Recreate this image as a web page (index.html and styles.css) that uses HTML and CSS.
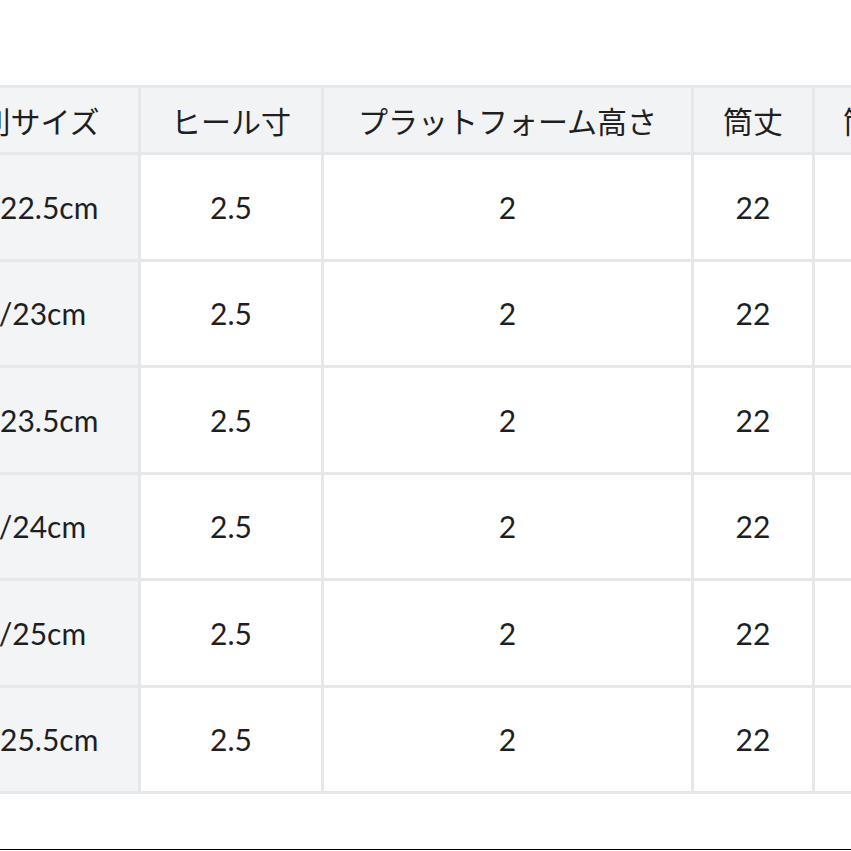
FILE: index.html
```html
<!DOCTYPE html>
<html lang="ja">
<head>
<meta charset="utf-8">
<title>サイズ表</title>
<link rel="stylesheet" href="styles.css">
</head>
<body>
<div class="page">
  <div class="size-table">
    <div class="cell head first">国別サイズ</div>
    <div class="cell head">ヒール寸</div>
    <div class="cell head">プラットフォーム高さ</div>
    <div class="cell head">筒丈</div>
    <div class="cell head">筒周り</div>

    <div class="cell first">35/22.5cm</div>
    <div class="cell">2.5</div>
    <div class="cell">2</div>
    <div class="cell">22</div>
    <div class="cell">33</div>

    <div class="cell first">36/23cm</div>
    <div class="cell">2.5</div>
    <div class="cell">2</div>
    <div class="cell">22</div>
    <div class="cell">33</div>

    <div class="cell first">37/23.5cm</div>
    <div class="cell">2.5</div>
    <div class="cell">2</div>
    <div class="cell">22</div>
    <div class="cell">34</div>

    <div class="cell first">38/24cm</div>
    <div class="cell">2.5</div>
    <div class="cell">2</div>
    <div class="cell">22</div>
    <div class="cell">34</div>

    <div class="cell first">39/25cm</div>
    <div class="cell">2.5</div>
    <div class="cell">2</div>
    <div class="cell">22</div>
    <div class="cell">35</div>

    <div class="cell first">40/25.5cm</div>
    <div class="cell">2.5</div>
    <div class="cell">2</div>
    <div class="cell">22</div>
    <div class="cell">35</div>
  </div>
</div>
</body>
</html>
```
FILE: styles.css
```css
html, body {
  margin: 0;
  padding: 0;
  background: #ffffff;
}

body {
  width: 851px;
  height: 851px;
  overflow: hidden;
}

.page {
  width: 851px;
  height: 850px;
  border-bottom: 1px solid #000000;
  overflow: hidden;
  padding-top: 85px;
  box-sizing: border-box;
}

.size-table {
  display: grid;
  grid-template-columns: 226px 180px 367px 118px 146px;
  grid-template-rows: 64px repeat(6, 103.5px);
  gap: 3px;
  padding: 3px;
  background: #e6e7e9;
  width: max-content;
  margin-left: -91px;
  font-family: "Lato", "Noto Sans CJK JP", sans-serif;
  font-size: 30px;
  color: #1f1f1f;
}

.cell {
  display: flex;
  align-items: center;
  justify-content: center;
  background: #ffffff;
  white-space: nowrap;
  line-height: 1;
}

.cell.head {
  background: #f2f3f5;
  font-family: "Noto Sans CJK JP", sans-serif;
}

.cell.first {
  background: #f3f4f6;
}
```
